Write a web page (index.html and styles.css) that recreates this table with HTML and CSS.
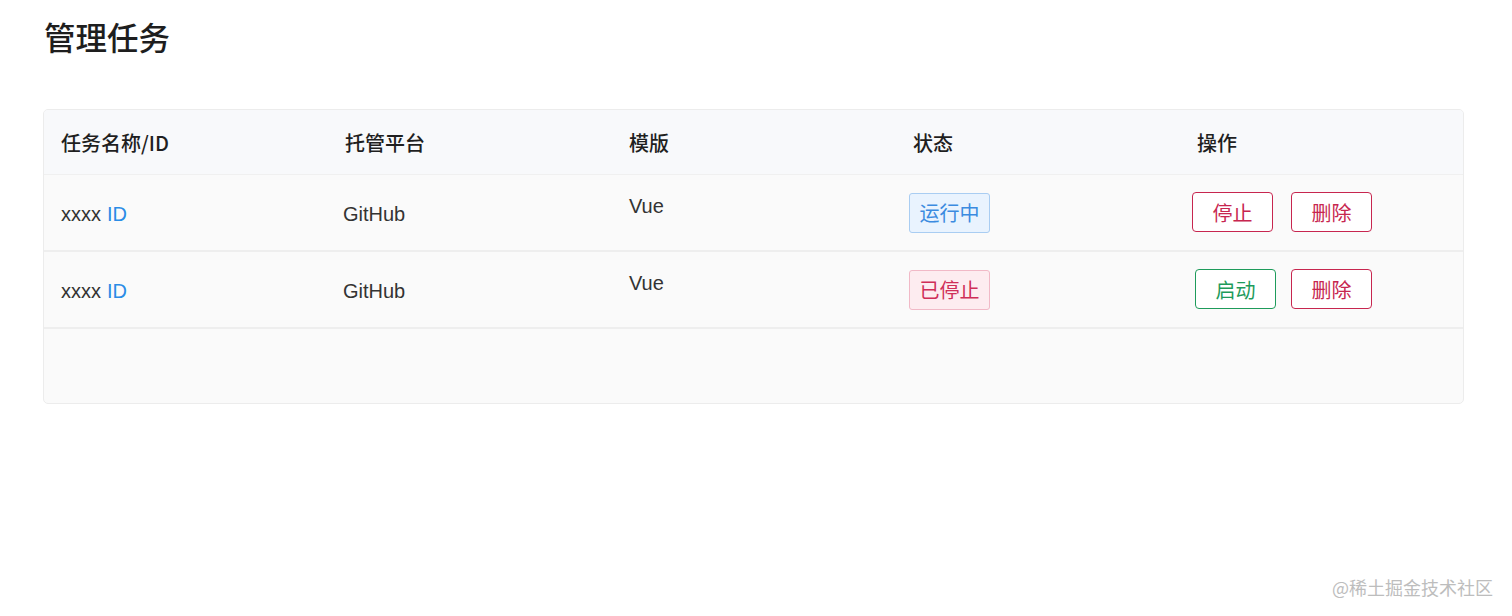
FILE: index.html
```html
<!DOCTYPE html>
<html lang="zh-CN">
<head>
<meta charset="utf-8">
<title>管理任务</title>
<link rel="stylesheet" href="styles.css">
</head>
<body>
<div class="page">
  <h1 class="title">管理任务</h1>
  <div class="table">
    <div class="row head">
      <div class="cell">任务名称/ID</div>
      <div class="cell">托管平台</div>
      <div class="cell">模版</div>
      <div class="cell">状态</div>
      <div class="cell">操作</div>
    </div>
    <div class="row body">
      <div class="cell">xxxx <span class="id">ID</span></div>
      <div class="cell shift">GitHub</div>
      <div class="cell top">Vue</div>
      <div class="cell tagcell"><span class="tag run">运行中</span></div>
      <div class="cell ops"><button class="btn red">停止</button><button class="btn red">删除</button></div>
    </div>
    <div class="row body">
      <div class="cell">xxxx <span class="id">ID</span></div>
      <div class="cell shift">GitHub</div>
      <div class="cell top">Vue</div>
      <div class="cell tagcell"><span class="tag stop">已停止</span></div>
      <div class="cell ops alt"><button class="btn green">启动</button><button class="btn red">删除</button></div>
    </div>
    <div class="empty"></div>
  </div>
</div>
<div class="mark">@稀土掘金技术社区</div>
</body>
</html>
```
FILE: styles.css
```css
html, body {
  margin: 0;
  padding: 0;
  background: #fff;
  font-family: "Liberation Sans", "Noto Sans CJK SC", sans-serif;
  color: #333;
}
.page {
  padding: 10px 48px 0 43px;
}
.title {
  margin: 0 0 0 1px;
  font-size: 31.5px;
  line-height: 52px;
  font-weight: 500;
  color: #1e1e1e;
  font-family: "Noto Sans CJK SC", sans-serif;
}
.table {
  margin-top: 47px;
  width: 1419px;
  border: 1px solid #ececec;
  border-radius: 5px;
  overflow: hidden;
  background: #fafafa;
}
.row {
  display: grid;
  grid-template-columns: repeat(5, 284px);
  border-bottom: 2px solid #eeeeee;
}
.head {
  height: 64px;
  background: #f8f9fb;
  border-bottom: 1px solid #f0f0f0;
}
.body {
  height: 75px;
}
.cell {
  display: flex;
  align-items: center;
  padding-left: 17px;
  font-size: 20px;
}
.head .cell {
  color: #1f1f1f;
  font-size: 20px;
  font-family: "Noto Sans CJK SC", sans-serif;
  font-weight: 500;
  padding-top: 0;
}
.body .cell {
  padding-top: 3px;
}
.cell.shift {
  padding-left: 15px;
}
.body .cell.top {
  align-items: flex-start;
  padding-top: 20px;
}
.body .cell.tagcell {
  padding-left: 13px;
  padding-top: 1px;
}
.id {
  color: #2a8ce6;
  margin-left: 6px;
}
.tag {
  display: inline-block;
  box-sizing: border-box;
  width: 81px;
  height: 40px;
  line-height: 38px;
  text-align: center;
  font-size: 20px;
  border-radius: 3px;
  border: 1px solid;
  font-family: "Noto Sans CJK SC", sans-serif;
}
.tag.run {
  background: #e9f3fe;
  border-color: #a9cdf2;
  color: #3b8be0;
}
.tag.stop {
  background: #fdecf0;
  border-color: #f1b9c7;
  color: #cf2e58;
}
.ops {
  gap: 18px;
  padding-left: 12px;
}
.ops.alt {
  gap: 15px;
  padding-left: 15px;
}
.btn {
  box-sizing: border-box;
  width: 81px;
  height: 40px;
  margin-top: -4px;
  background: #fff;
  border: 1.5px solid;
  border-radius: 4px;
  font-size: 20px;
  font-family: "Noto Sans CJK SC", sans-serif;
  padding: 0;
  cursor: pointer;
}
.btn.red {
  color: #c7264f;
  border-color: #c7264f;
}
.btn.green {
  color: #1e9b5b;
  border-color: #1e9b5b;
}
.empty {
  height: 74px;
}
.mark {
  position: absolute;
  right: 19px;
  top: 574px;
  font-size: 18px;
  color: #bdbdbd;
  font-family: "Noto Sans CJK SC", sans-serif;
}
```
